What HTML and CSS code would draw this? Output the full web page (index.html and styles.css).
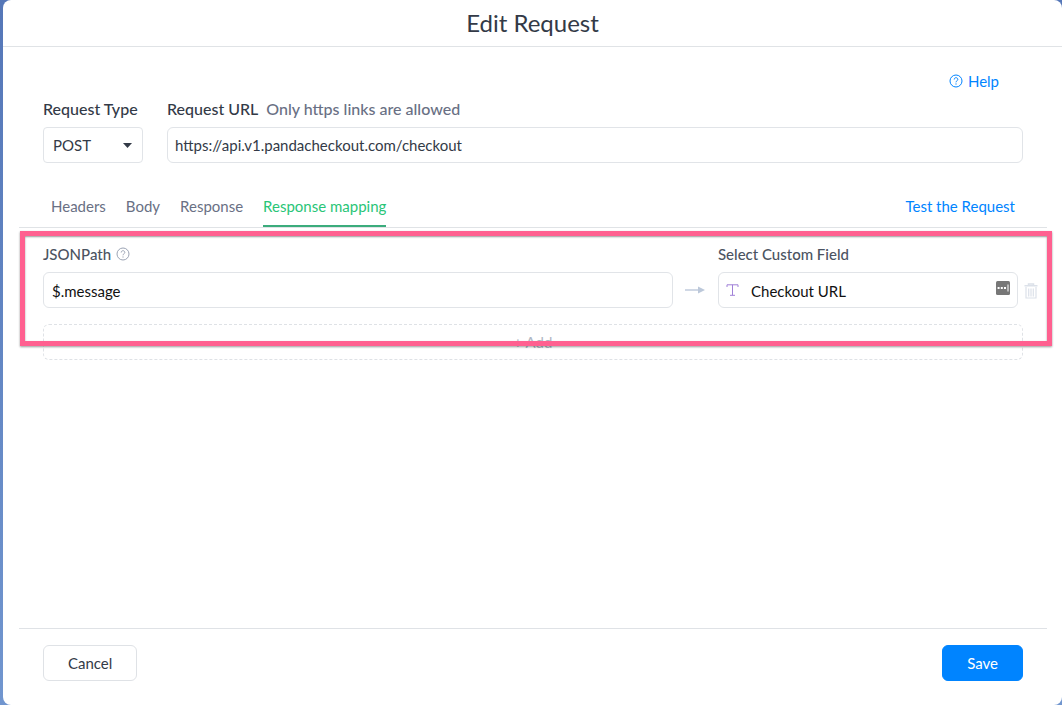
FILE: index.html
```html
<!DOCTYPE html>
<html lang="en">
<head>
<meta charset="utf-8">
<meta name="viewport" content="width=device-width, initial-scale=1">
<title>Edit Request</title>
<link rel="stylesheet" href="styles.css">
</head>
<body>
<main class="dialog">
  <header class="dialog-header"><h1 class="title">Edit Request</h1></header>
  <div class="content">
    <div class="help-row">
      <a class="link help" href="#">
        <svg class="help-icon" viewBox="0 0 14 14" fill="none" stroke="currentColor" aria-hidden="true"><circle cx="7" cy="7" r="6"/><path d="M5.2 5.5c0-2.4 3.6-2.4 3.6 0 0 1.3-1.8 1.2-1.8 2.8M7 9.4v1.2"/></svg>
        Help
      </a>
    </div>
    <div class="request-row">
      <div class="field type-field">
        <label class="label large" for="type">Request Type</label>
        <div class="select-wrap">
          <select class="control select" id="type"><option>POST</option></select>
          <svg class="caret" viewBox="0 0 9 5" aria-hidden="true"><path d="M0 0h9L4.5 5z" fill="currentColor"/></svg>
        </div>
      </div>
      <div class="field url-field">
        <div class="label-row"><label class="label large" for="url">Request URL</label><span class="hint large">Only https links are allowed</span></div>
        <input class="control" id="url" type="text" value="https://api.v1.pandacheckout.com/checkout">
      </div>
    </div>
    <nav class="tabs">
      <button class="tab" type="button">Headers</button>
      <button class="tab" type="button">Body</button>
      <button class="tab" type="button">Response</button>
      <button class="tab active" type="button">Response mapping</button>
      <a class="link test" href="#">Test the Request</a>
    </nav>
    <section class="mapping">
      <div class="mapping-row">
        <div class="field path-field">
          <div class="label-row map-label">
            <label class="label muted" for="path">JSONPath</label>
            <svg class="help-icon grey" viewBox="0 0 14 14" fill="none" stroke="currentColor" aria-hidden="true"><circle cx="7" cy="7" r="6"/><path d="M5.2 5.5c0-2.4 3.6-2.4 3.6 0 0 1.3-1.8 1.2-1.8 2.8M7 9.4v1.2"/></svg>
          </div>
          <input class="control dark" id="path" type="text" value="$.message">
        </div>
        <svg class="arrow" viewBox="0 0 20 8" aria-hidden="true"><path d="M0 4h14" stroke="currentColor" stroke-width="1.4"/><path d="M13 .5 20 4l-7 3.500z" fill="currentColor"/></svg>
        <div class="field custom-field">
          <div class="label-row map-label"><label class="label muted" for="custom">Select Custom Field</label></div>
          <div class="control combo">
            <svg class="type-icon" viewBox="0 0 12 12" fill="none" stroke="currentColor" aria-hidden="true"><path d="M.5 3V.8h11V3M6 .8v10.400M3.500 11.300h5"/></svg>
            <input class="combo-input" id="custom" type="text" value="Checkout URL">
            <svg class="fill-icon" viewBox="0 0 14 14" aria-hidden="true"><rect width="14" height="14" rx="1.500" fill="#777"/><path d="M1.600 6h2v2h-2zM4.800 6h2v2h-2zM8 6h2v2H8zM11.500 3.500h1v7h-1z" fill="#fff"/></svg>
          </div>
        </div>
        <button class="trash" type="button" aria-label="Delete mapping">
          <svg class="trash-icon" viewBox="0 0 14 16" fill="none" stroke="currentColor" aria-hidden="true"><path d="M.5 2.800h13M4.500 2.500V1h5v1.500" stroke-width="1.500"/><path d="M2 4v11h10V4M4.700 5.500v8M7 5.500v8M9.300 5.500v8" stroke-width="1.200"/></svg>
        </button>
      </div>
      <button class="add" type="button">+ Add</button>
      <div class="highlight"></div>
    </section>
  </div>
  <footer class="footer">
    <button class="button" type="button">Cancel</button>
    <button class="button primary" type="button">Save</button>
  </footer>
</main>
</body>
</html>
```
FILE: styles.css
```css
* { box-sizing: border-box; }
body {
  margin: 0;
  padding-left: 3px;
  background: linear-gradient(#5577b8, #7196cf);
  font: 15px/20px Lato, "Liberation Sans", sans-serif;
  color: #333a47;
}
button, input, select { font: inherit; color: inherit; }
button { cursor: pointer; }
.dialog {
  display: flex;
  flex-direction: column;
  min-height: 100vh;
  background: #fff;
  border-radius: 8px;
}
.dialog-header {
  padding: 8px 0;
  border-bottom: 1px solid #e0e3e6;
  text-align: center;
}
.title { margin: 0; font-size: 24px; line-height: 30px; font-weight: 400; }
.content { flex: 1; padding: 24px 15px 0 16px; }
.help-row { display: flex; justify-content: flex-end; padding-right: 48px; }
.link { color: #0084ff; text-decoration: none; }
.help { display: flex; align-items: center; gap: 5px; }
.help-icon { width: 14px; height: 14px; stroke-width: 1; }
.grey { color: #9ba3b4; }
.request-row { display: flex; gap: 24px; padding: 8px 24px 0; }
.field { display: flex; flex-direction: column; }
.type-field { flex: 0 0 100px; gap: 8px; }
.url-field { flex: 1; gap: 8px; }
.label-row { display: flex; align-items: center; gap: 8px; }
.label { font-weight: 500; white-space: nowrap; }
.large { font-size: 16px; }
.muted { color: #4b5361; }
.hint { color: #697084; font-weight: 500; }
.control {
  width: 100%;
  height: 36px;
  padding: 0 7px;
  border: 1px solid #e1e4e8;
  border-radius: 6px;
  background: #fff;
}
.dark { padding: 2px 8px 0; color: #111; }
.select-wrap { display: grid; align-items: center; }
.select, .caret { grid-area: 1 / 1; }
.select { appearance: none; padding-left: 9px; border-radius: 4px; }
.caret { width: 9px; height: 5px; justify-self: end; margin-right: 11px; pointer-events: none; }
.tabs {
  display: flex;
  gap: 20px;
  margin-top: 28px;
  padding: 0 32px;
  border-bottom: 1px solid #e0e3e6;
}
.tab {
  height: 36px;
  padding: 0 0 4px;
  border: 0;
  border-bottom: 2px solid transparent;
  background: none;
  color: #697084;
}
.active { color: #29c577; border-color: #3bac7c; }
.test { margin-left: auto; padding-top: 5px; }
.mapping { position: relative; padding: 16px 0 0 24px; }
.mapping-row { display: flex; align-items: flex-end; }
.path-field { flex: 1; }
.custom-field { flex: 0 0 300px; }
.map-label { height: 28px; gap: 5px; align-items: flex-start; }
.map-label .grey { margin-top: 3px; }
.arrow { width: 20px; height: 8px; margin: 0 13px 14px 12px; color: #bcc8da; }
.combo { display: flex; align-items: center; gap: 12px; }
.type-icon { width: 13px; height: 12px; color: #a080d8; }
.combo-input { flex: 1; min-width: 0; padding: 2px 0 0; border: 0; background: none; color: #111; }
.fill-icon { width: 14px; height: 14px; margin-bottom: 4px; }
.trash { display: flex; padding: 0; margin: 0 9px 9px 6px; border: 0; background: none; color: #dce1e9; }
.trash-icon { width: 14px; height: 16px; }
.add {
  display: block;
  width: calc(100% - 24px);
  height: 36px;
  margin-top: 16px;
  border: 1px dashed #dfe2e6;
  border-radius: 6px;
  background: none;
  color: #b0b7c5;
}
.highlight {
  position: absolute;
  top: 3px;
  left: 1px;
  right: -5px;
  bottom: 14px;
  border: 5px solid #ff6090;
  box-shadow: 0 1px 2px #0006, inset 0 1px 2px #0006;
  pointer-events: none;
}
.footer {
  display: flex;
  justify-content: space-between;
  margin: 0 15px 0 16px;
  padding: 16px 24px 24px;
  border-top: 1px solid #dfe2e6;
}
.button {
  height: 36px;
  padding: 0 24px;
  border: 1px solid #dfe2e6;
  border-radius: 6px;
  background: #fff;
}
.primary { border-color: #0084ff; background: #0084ff; color: #fff; }
```
